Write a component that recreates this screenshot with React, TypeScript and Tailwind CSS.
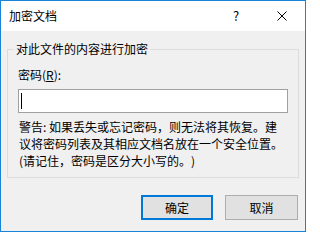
export default function App() {
  return (
    <div className="w-[306px] h-[232px] border border-[#1883d7] bg-[#f0f0f0] flex flex-col text-[12px] text-black font-['Noto_Sans_CJK_SC','Noto_Sans',sans-serif] leading-[16px] [text-spacing-trim:space-all]">
      {/* Title bar */}
      <div className="h-[30px] bg-white flex items-center">
        <span className="pl-[8px] flex-1">加密文档</span>
        <div className="w-[46px] h-full flex items-center justify-center text-[13px]">?</div>
        <div className="w-[46px] h-full flex items-center justify-center">
          <svg width="10" height="10" viewBox="0 0 10 10">
            <path d="M0.5 0.5 L9.5 9.5 M9.5 0.5 L0.5 9.5" stroke="#000" strokeWidth="1" />
          </svg>
        </div>
      </div>

      {/* Body */}
      <div className="flex-1 flex flex-col px-[6px] pt-[10px]">
        <fieldset className="border border-[#dcdcdc] px-[10px] pb-[8px]">
          <legend className="ml-[-4px] px-[2px]">对此文件的内容进行加密</legend>
          <div className="mt-[10px]">
            密码(<span className="underline">R</span>):
          </div>
          <div className="mt-[6px] h-[24px] border border-[#a0a0a0] bg-white flex items-center pl-[2px]">
            <div className="w-px h-[16px] bg-black" />
          </div>
          <p className="mt-[5px] leading-[17px] pl-px">
            警告: 如果丢失或忘记密码，则无法将其恢复。建
            <br />
            议将密码列表及其相应文档名放在一个安全位置。
            <br />
            (请记住，密码是区分大小写的。)
          </p>
        </fieldset>

        <div className="mt-[17px] flex justify-end gap-[12px] pr-px">
          <button className="w-[72px] h-[25px] bg-[#e1e1e1] border-2 border-[#0078d7]">确定</button>
          <button className="w-[73px] h-[25px] bg-[#e1e1e1] border border-[#adadad]">取消</button>
        </div>
      </div>
    </div>
  )
}
